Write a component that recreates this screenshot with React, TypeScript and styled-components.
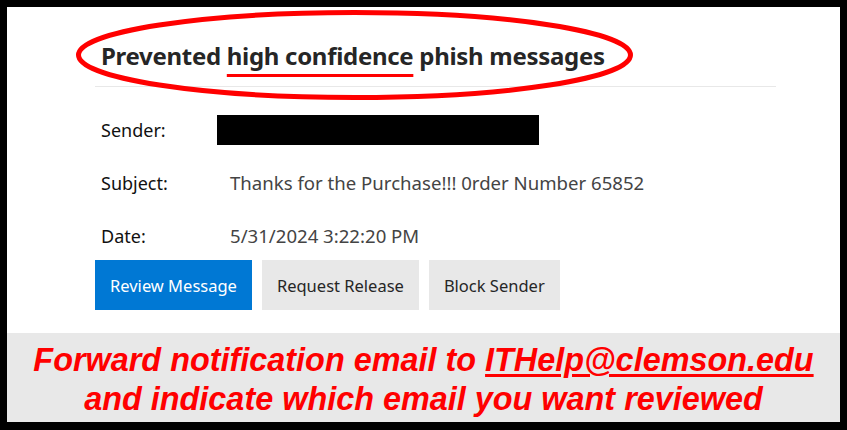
import styled, { createGlobalStyle } from 'styled-components';

const GlobalStyle = createGlobalStyle`
  html, body {
    margin: 0;
    padding: 0;
    background: #000;
  }
  * {
    box-sizing: border-box;
  }
`;

const Frame = styled.div`
  width: 847px;
  height: 430px;
  background: #000;
  padding: 7px 7px 8px 7px;
  display: flex;
  flex-direction: column;
`;

const Card = styled.div`
  position: relative;
  height: 326px;
  background: #fff;
  padding: 0 0 0 88px;
  font-family: 'Noto Sans', 'Open Sans', sans-serif;
`;

const Header = styled.div`
  width: 681px;
  padding: 32px 0 0 6px;
  height: 80px;
  border-bottom: 1px solid #e8e8e8;
`;

const Title = styled.h1`
  margin: 0;
  font-size: 24px;
  font-weight: 700;
  color: #262626;
  letter-spacing: -0.3px;
  line-height: 34px;
`;

const Marked = styled.span`
  text-decoration: underline;
  text-decoration-color: #ff0000;
  text-decoration-thickness: 3px;
  text-underline-offset: 9px;
`;

const Ring = styled.svg`
  position: absolute;
  left: 0;
  top: 0;
  pointer-events: none;
`;

const Details = styled.div`
  display: grid;
  grid-template-columns: 129px auto;
  grid-auto-rows: 53px;
  align-items: center;
  padding: 16px 0 0 6px;
  width: 720px;
`;

const Label = styled.div`
  font-size: 18px;
  color: #111;
`;

const Value = styled.div`
  font-size: 18.6px;
  color: #444;
`;

const Redacted = styled.div`
  width: 322px;
  height: 30px;
  margin-left: -13px;
  background: #000;
`;

const Actions = styled.div`
  display: flex;
  gap: 10px;
  margin-top: -2px;
`;

const Button = styled.button<{ $primary?: boolean }>`
  height: 50px;
  padding: 0 15px;
  border: none;
  font-family: 'Noto Sans', 'Open Sans', sans-serif;
  font-size: 16.5px;
  color: ${({ $primary }) => ($primary ? '#fff' : '#262626')};
  background: ${({ $primary }) => ($primary ? '#0078d4' : '#e8e8e8')};
`;

const Footer = styled.div`
  flex: 1;
  background: #e8e8e8;
  display: flex;
  flex-direction: column;
  align-items: center;
  padding-top: 8px;
  font-family: 'Liberation Sans', Arial, sans-serif;
  font-weight: 700;
  font-style: italic;
  font-size: 32.4px;
  line-height: 39px;
  color: #ff0000;
`;

const Link = styled.span`
  text-decoration: underline;
  text-decoration-thickness: 3px;
  text-underline-offset: 3px;
`;

export default function App() {
  return (
    <>
      <GlobalStyle />
      <Frame>
        <Card>
          <Ring width="700" height="110" viewBox="0 0 700 110">
            <ellipse cx="347.5" cy="48" rx="276" ry="42.5" fill="none" stroke="#ff0000" strokeWidth="5" />
          </Ring>
          <Header>
            <Title>
              Prevented <Marked>high confidence</Marked> phish messages
            </Title>
          </Header>
          <Details>
            <Label>Sender:</Label>
            <Redacted />
            <Label>Subject:</Label>
            <Value>Thanks for the Purchase!!! 0rder Number 65852</Value>
            <Label>Date:</Label>
            <Value>5/31/2024 3:22:20 PM</Value>
          </Details>
          <Actions>
            <Button $primary>Review Message</Button>
            <Button>Request Release</Button>
            <Button>Block Sender</Button>
          </Actions>
        </Card>
        <Footer>
          <div>
            Forward notification email to <Link>ITHelp@clemson.edu</Link>
          </div>
          <div>and indicate which email you want reviewed</div>
        </Footer>
      </Frame>
    </>
  );
}
